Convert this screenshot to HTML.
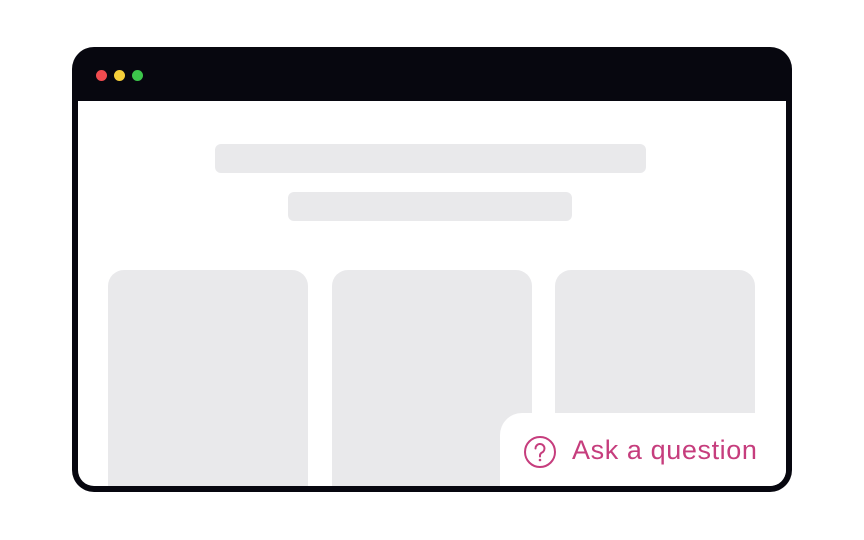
<!DOCTYPE html>
<html><head><style>
body{margin:0;width:864px;height:540px;background:#fff;position:relative;overflow:hidden;font-family:"Liberation Sans",sans-serif}
.frame{position:absolute;left:72px;top:47px;width:720px;height:445px;background:#07070f;border-radius:22px;overflow:hidden}
.inner{position:absolute;left:6px;top:54px;width:708px;height:385px;background:#fff;border-radius:0 0 16px 16px;overflow:hidden}
.dot{position:absolute;top:23px;width:11px;height:11px;border-radius:50%}
.g{position:absolute;background:#e9e9eb}
.ask{position:absolute;left:422px;top:312px;width:300px;height:90px;background:#fff;border-radius:22px 0 0 0}
.ask span{position:absolute;left:72px;top:22px;font-size:27px;color:#c63d7d;letter-spacing:0.6px}
</style></head><body>
<div class="frame">
<div class="dot" style="left:24px;background:#f04b4f"></div>
<div class="dot" style="left:42px;background:#f5cf3a"></div>
<div class="dot" style="left:60px;background:#3cc64b"></div>
<div class="inner">
<div class="g" style="left:137px;top:43px;width:431px;height:29px;border-radius:6px"></div>
<div class="g" style="left:210px;top:91px;width:284px;height:29px;border-radius:6px"></div>
<div class="g" style="left:30px;top:169px;width:200px;height:230px;border-radius:16px"></div>
<div class="g" style="left:254px;top:169px;width:200px;height:230px;border-radius:16px"></div>
<div class="g" style="left:477px;top:169px;width:200px;height:230px;border-radius:16px"></div>
<div class="ask">
<svg style="position:absolute;left:23px;top:22px" width="34" height="34" viewBox="0 0 34 34"><circle cx="17" cy="17" r="15" fill="none" stroke="#c63d7d" stroke-width="2"/><path d="M12.5 13.5a4.5 4.5 0 1 1 6.5 4c-1.5.8-2 1.6-2 3v1" fill="none" stroke="#c63d7d" stroke-width="2" stroke-linecap="round"/><circle cx="17" cy="25" r="1.3" fill="#c63d7d"/></svg>
<span>Ask a question</span>
</div>
</div>
</div>
</body></html>
